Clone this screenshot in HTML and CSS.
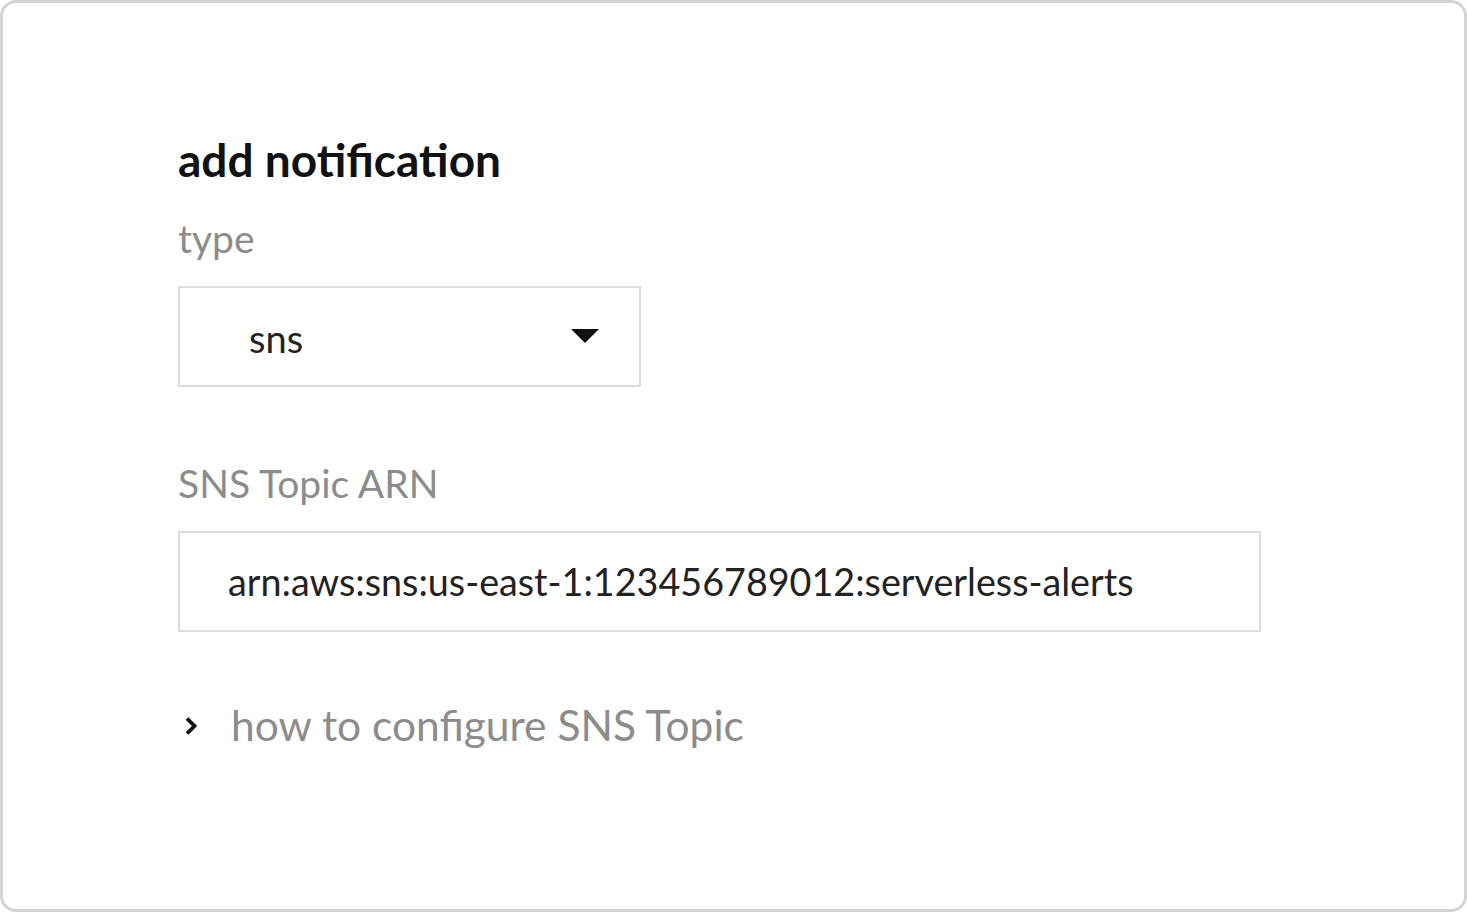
FILE: index.html
```html
<!DOCTYPE html>
<html>
<head>
<meta charset="utf-8">
<link rel="stylesheet" href="styles.css">
</head>
<body>
<div class="card">
  <h1 class="title">add notification</h1>
  <div class="label label-type">type</div>
  <div class="select">
    <span class="select-value">sns</span>
    <svg class="caret" width="28" height="15" viewBox="0 0 28 15"><polygon points="0,0 28,0 14,14" fill="#111"/></svg>
  </div>
  <div class="label label-arn">SNS Topic ARN</div>
  <div class="input">arn:aws:sns:us-east-1:123456789012:serverless-alerts</div>
  <div class="help">
    <svg class="chevron" width="16" height="22" viewBox="0 0 16 22"><polyline points="4,3.5 11.5,11 4,18.5" fill="none" stroke="#111" stroke-width="3.8"/></svg>
    <span class="help-text">how to configure SNS Topic</span>
  </div>
</div>
</body>
</html>
```
FILE: styles.css
```css
html, body {
  margin: 0;
  padding: 0;
  background: #fff;
}
body {
  font-family: "Lato", "Open Sans", sans-serif;
}
.card {
  box-sizing: border-box;
  width: 1467px;
  height: 912px;
  border: 3px solid #d4d4d4;
  border-radius: 16px;
  padding: 130px 0 0 175px;
  background: #fff;
}
.title {
  margin: 0;
  font-size: 46px;
  font-weight: 700;
  color: #111;
  line-height: 54px;
}
.label {
  font-size: 39px;
  color: #8c8c8c;
  line-height: 40px;
}
.label-type {
  margin-top: 31px;
}
.label-arn {
  margin-top: 76px;
}
.select {
  box-sizing: border-box;
  margin-top: 28px;
  width: 463px;
  height: 101px;
  border: 2px solid #dcdcdc;
  display: flex;
  align-items: center;
  justify-content: space-between;
  padding: 3px 40px 0 69px;
}
.select-value {
  font-size: 38px;
  line-height: 40px;
  color: #222;
}
.caret {
  margin-top: -3px;
}
.input {
  box-sizing: border-box;
  margin-top: 28px;
  width: 1083px;
  height: 101px;
  border: 2px solid #dcdcdc;
  display: flex;
  align-items: center;
  padding: 0 0 0 48px;
  font-size: 37.7px;
  line-height: 40px;
  color: #222;
}
.help {
  margin-top: 68px;
  display: flex;
  align-items: center;
  gap: 32px;
  padding-left: 5px;
  line-height: 50px;
}
.chevron {
  margin-top: 2px;
}
.help-text {
  font-size: 42.5px;
  color: #8c8c8c;
}
```
